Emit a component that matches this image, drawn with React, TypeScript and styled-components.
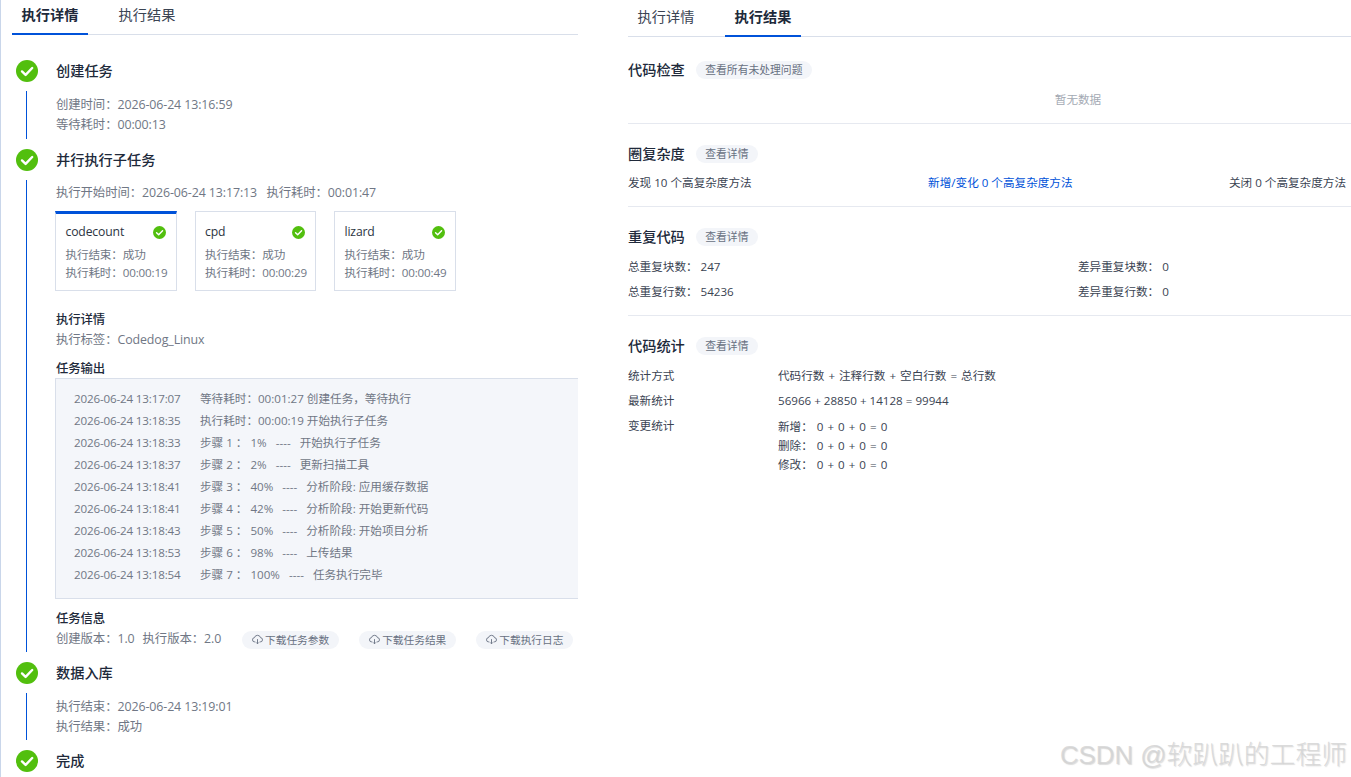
import styled, { createGlobalStyle } from 'styled-components';

const blue = '#0052d9';
const green = '#52bf0e';
const ink = '#20293a';
const gray = '#707785';
const line = '#d9dfea';
const soft = '#f3f5f9';

const GlobalStyle = createGlobalStyle`
  html, body {
    margin: 0;
    background: #fff;
  }
  * {
    box-sizing: border-box;
  }
`;

const Page = styled.div`
  position: relative;
  display: flex;
  width: 1351px;
  height: 777px;
  overflow: hidden;
  background: #fff;
  border-left: 1px solid #c9d6ea;
  font-family: 'Open Sans', 'Noto Sans CJK SC', sans-serif;
  font-size: 12.4px;
  line-height: 20px;
  letter-spacing: -0.1px;
  color: ${gray};
`;

const LeftPane = styled.section`
  width: 566px;
  margin-left: 11px;
  flex-shrink: 0;
`;

const RightPane = styled.section`
  flex: 1;
  margin-left: 50px;
  min-width: 0;
`;

const Tabs = styled.div<{ $tall?: boolean }>`
  display: flex;
  height: ${(p) => (p.$tall ? 37 : 35)}px;
  line-height: ${(p) => (p.$tall ? 33 : 29)}px;
  border-bottom: 1px solid ${line};
`;

const Tab = styled.div<{ $active?: boolean }>`
  width: 76px;
  margin-right: 21px;
  margin-bottom: -1px;
  text-align: center;
  font-size: 14.2px;
  letter-spacing: 0;
  font-weight: ${(p) => (p.$active ? 600 : 400)};
  color: ${(p) => (p.$active ? ink : '#3a4352')};
  border-bottom: 2px solid ${(p) => (p.$active ? blue : 'transparent')};
`;

const Timeline = styled.div`
  padding: 25px 0 0 4px;
`;

const Step = styled.div`
  display: flex;
`;

const Rail = styled.div`
  display: flex;
  flex-direction: column;
  align-items: center;
  width: 22px;
  margin-right: 18px;
  flex-shrink: 0;
`;

const Connector = styled.div`
  flex: 1;
  width: 1px;
  margin: 9px 1px 10px 0;
  background: ${blue};
`;

const StepBody = styled.div<{ $height: number }>`
  flex: 1;
  min-width: 0;
  height: ${(p) => p.$height}px;
`;

const StepTitle = styled.div<{ $gap: number }>`
  font-size: 14.2px;
  line-height: 22px;
  font-weight: 500;
  letter-spacing: 0;
  color: ${ink};
  margin-bottom: ${(p) => p.$gap}px;
`;

const Line = styled.div``;

const CardRow = styled.div`
  display: flex;
  gap: 18px;
  margin: 8px 0 0 -1px;
`;

const Card = styled.div<{ $active?: boolean }>`
  width: 121.5px;
  height: 80px;
  padding: ${(p) => (p.$active ? 8 : 10)}px 10px 0 9.5px;
  border: 1px solid ${line};
  border-top: ${(p) => (p.$active ? `3px solid ${blue}` : `1px solid ${line}`)};
  line-height: 18px;
  font-size: 11.6px;
  letter-spacing: -0.15px;
  white-space: nowrap;
`;

const CardHead = styled.div`
  display: flex;
  align-items: center;
  justify-content: space-between;
  height: 20px;
  margin-bottom: 4px;
  font-size: 12.2px;
  color: #2c3442;
`;

const SubTitle = styled.div<{ $top: number }>`
  margin-top: ${(p) => p.$top}px;
  font-size: 12.4px;
  line-height: 20px;
  font-weight: 500;
  color: ${ink};
`;

const LogBox = styled.div`
  height: 221px;
  margin: -1px 0 0 -1px;
  padding: 9px 18px 0;
  background: #f4f6fa;
  border: 1px solid ${line};
  border-right: 0;
`;

const LogRow = styled.div`
  display: flex;
  height: 22px;
  line-height: 22px;
  font-size: 11.6px;
  letter-spacing: -0.15px;
`;

const LogTime = styled.span`
  width: 126px;
  flex-shrink: 0;
`;

const LogText = styled.span`
  white-space: pre;
  letter-spacing: 0;
`;

const InfoRow = styled.div`
  display: flex;
  align-items: center;
`;

const Versions = styled.div`
  display: flex;
  gap: 8px;
  width: 186px;
`;

const DownloadGroup = styled.div`
  display: flex;
  gap: 20px;
  margin-top: 1px;
`;

const Pill = styled.span`
  display: inline-flex;
  align-items: center;
  height: 18px;
  padding: 0 9.5px;
  border-radius: 9px;
  background: ${soft};
  font-size: 10.8px;
  line-height: 18px;
  letter-spacing: 0;
  color: #687182;
  white-space: nowrap;
`;

const DownloadPill = styled(Pill)`
  gap: 2px;
  padding: 0 10px;
  font-size: 10.7px;
`;

const Sections = styled.div`
  padding-top: 22px;
`;

const Section = styled.div<{ $height: number; $last?: boolean }>`
  height: ${(p) => p.$height}px;
  margin-bottom: 19px;
  border-bottom: ${(p) => (p.$last ? 'none' : '1px solid #e6e9f0')};
  color: #3a4352;
  font-size: 11.6px;
  letter-spacing: 0;
`;

const SectionHead = styled.div`
  display: flex;
  align-items: center;
  gap: 11px;
  height: 22px;
`;

const SectionTitle = styled.div`
  font-size: 14.2px;
  font-weight: 500;
  color: ${ink};
`;

const Empty = styled.div`
  margin-top: 9px;
  padding-left: 177px;
  text-align: center;
  color: #a3a9b3;
`;

const SpreadRow = styled.div`
  display: flex;
  justify-content: space-between;
  margin-top: 8px;
  padding-right: 5px;
`;

const Link = styled.span`
  margin-left: 20px;
  color: ${blue};
`;

const TwoCols = styled.div`
  display: grid;
  grid-template-columns: 450px 1fr;
  row-gap: 5px;
  margin-top: 9px;
`;

const StatRows = styled.div`
  display: grid;
  grid-template-columns: 150px 1fr;
  row-gap: 5px;
  margin-top: 9px;
`;

const Formula = styled.span`
  word-spacing: 1px;
`;

const StatLines = styled.div`
  padding-top: 1px;
  line-height: 19px;
  word-spacing: 1px;
`;

const Watermark = styled.div`
  position: absolute;
  right: 4px;
  bottom: 5px;
  font-family: 'Liberation Sans', 'Noto Sans CJK SC', sans-serif;
  font-size: 25.8px;
  line-height: 34px;
  font-weight: 300;
  letter-spacing: 0;
  white-space: nowrap;
  color: rgba(210, 210, 210, 0.8);
  text-shadow: 1px 1px 1px rgba(120, 120, 120, 0.25);
`;

const CheckSvg = styled.svg`
  flex-shrink: 0;
`;

function CheckIcon({ size }: { size: number }) {
  return (
    <CheckSvg width={size} height={size} viewBox="0 0 22 22">
      <circle cx="11" cy="11" r="11" fill={green} />
      <path d="M6 11.4l3.6 3.5L16.200 8" fill="none" stroke="#fff" strokeWidth="2.4" strokeLinecap="round" strokeLinejoin="round" />
    </CheckSvg>
  );
}

function CloudIcon() {
  return (
    <svg width="11" height="11" viewBox="0 0 12 12" fill="none" stroke="#687182" strokeWidth="1">
      <path d="M3.6 8.6H3a2.3 2.3 0 0 1-.3-4.6 3.4 3.4 0 0 1 6.6 0A2.3 2.3 0 0 1 9 8.6h-.6" />
      <path d="M6 5.6v5M4.500 9.200L6 10.700l1.500-1.500" />
    </svg>
  );
}

const cards = [
  { name: 'codecount', time: '00:00:19', active: true },
  { name: 'cpd', time: '00:00:29' },
  { name: 'lizard', time: '00:00:49' },
];

const logs = [
  ['2026-06-24 13:17:07', '等待耗时：00:01:27 创建任务，等待执行'],
  ['2026-06-24 13:18:35', '执行耗时：00:00:19 开始执行子任务'],
  ['2026-06-24 13:18:33', '步骤 1 ： 1%   ----   开始执行子任务'],
  ['2026-06-24 13:18:37', '步骤 2 ： 2%   ----   更新扫描工具'],
  ['2026-06-24 13:18:41', '步骤 3 ： 40%   ----   分析阶段: 应用缓存数据'],
  ['2026-06-24 13:18:41', '步骤 4 ： 42%   ----   分析阶段: 开始更新代码'],
  ['2026-06-24 13:18:43', '步骤 5 ： 50%   ----   分析阶段: 开始项目分析'],
  ['2026-06-24 13:18:53', '步骤 6 ： 98%   ----   上传结果'],
  ['2026-06-24 13:18:54', '步骤 7 ： 100%   ----   任务执行完毕'],
];

const downloads = ['下载任务参数', '下载任务结果', '下载执行日志'];

export default function App() {
  return (
    <Page>
      <GlobalStyle />
      <LeftPane>
        <Tabs>
          <Tab $active>执行详情</Tab>
          <Tab>执行结果</Tab>
        </Tabs>
        <Timeline>
          <Step>
            <Rail>
              <CheckIcon size={22} />
              <Connector />
            </Rail>
            <StepBody $height={89}>
              <StepTitle $gap={13}>创建任务</StepTitle>
              <Line>创建时间：2026-06-24 13:16:59</Line>
              <Line>等待耗时：00:00:13</Line>
            </StepBody>
          </Step>
          <Step>
            <Rail>
              <CheckIcon size={22} />
              <Connector />
            </Rail>
            <StepBody $height={513}>
              <StepTitle $gap={12}>并行执行子任务</StepTitle>
              <Line>执行开始时间：2026-06-24 13:17:13&nbsp;&nbsp;&nbsp;执行耗时：00:01:47</Line>
              <CardRow>
                {cards.map((card) => (
                  <Card key={card.name} $active={card.active}>
                    <CardHead>
                      {card.name}
                      <CheckIcon size={13} />
                    </CardHead>
                    <Line>执行结束：成功</Line>
                    <Line>执行耗时：{card.time}</Line>
                  </Card>
                ))}
              </CardRow>
              <SubTitle $top={19}>执行详情</SubTitle>
              <Line>执行标签：Codedog_Linux</Line>
              <SubTitle $top={9}>任务输出</SubTitle>
              <LogBox>
                {logs.map((row, i) => (
                  <LogRow key={i}>
                    <LogTime>{row[0]}</LogTime>
                    <LogText>{row[1]}</LogText>
                  </LogRow>
                ))}
              </LogBox>
              <SubTitle $top={10}>任务信息</SubTitle>
              <InfoRow>
                <Versions>
                  <span>创建版本：1.0</span>
                  <span>执行版本：2.0</span>
                </Versions>
                <DownloadGroup>
                  {downloads.map((label) => (
                    <DownloadPill key={label}>
                      <CloudIcon />
                      {label}
                    </DownloadPill>
                  ))}
                </DownloadGroup>
              </InfoRow>
            </StepBody>
          </Step>
          <Step>
            <Rail>
              <CheckIcon size={22} />
              <Connector />
            </Rail>
            <StepBody $height={88}>
              <StepTitle $gap={13}>数据入库</StepTitle>
              <Line>执行结束：2026-06-24 13:19:01</Line>
              <Line>执行结果：成功</Line>
            </StepBody>
          </Step>
          <Step>
            <Rail>
              <CheckIcon size={22} />
            </Rail>
            <StepBody $height={27}>
              <StepTitle $gap={0}>完成</StepTitle>
            </StepBody>
          </Step>
        </Timeline>
      </LeftPane>
      <RightPane>
        <Tabs $tall>
          <Tab>执行详情</Tab>
          <Tab $active>执行结果</Tab>
        </Tabs>
        <Sections>
          <Section $height={65}>
            <SectionHead>
              <SectionTitle>代码检查</SectionTitle>
              <Pill>查看所有未处理问题</Pill>
            </SectionHead>
            <Empty>暂无数据</Empty>
          </Section>
          <Section $height={64}>
            <SectionHead>
              <SectionTitle>圈复杂度</SectionTitle>
              <Pill>查看详情</Pill>
            </SectionHead>
            <SpreadRow>
              <span>发现 10 个高复杂度方法</span>
              <Link>新增/变化 0 个高复杂度方法</Link>
              <span>关闭 0 个高复杂度方法</span>
            </SpreadRow>
          </Section>
          <Section $height={90}>
            <SectionHead>
              <SectionTitle>重复代码</SectionTitle>
              <Pill>查看详情</Pill>
            </SectionHead>
            <TwoCols>
              <span>总重复块数：&nbsp;247</span>
              <span>差异重复块数：&nbsp;0</span>
              <span>总重复行数：&nbsp;54236</span>
              <span>差异重复行数：&nbsp;0</span>
            </TwoCols>
          </Section>
          <Section $height={130} $last>
            <SectionHead>
              <SectionTitle>代码统计</SectionTitle>
              <Pill>查看详情</Pill>
            </SectionHead>
            <StatRows>
              <span>统计方式</span>
              <Formula>代码行数 + 注释行数 + 空白行数 = 总行数</Formula>
              <span>最新统计</span>
              <span>56966 + 28850 + 14128 = 99944</span>
              <span>变更统计</span>
              <StatLines>
                <div>新增：&nbsp;0 + 0 + 0 = 0</div>
                <div>删除：&nbsp;0 + 0 + 0 = 0</div>
                <div>修改：&nbsp;0 + 0 + 0 = 0</div>
              </StatLines>
            </StatRows>
          </Section>
        </Sections>
      </RightPane>
      <Watermark>CSDN @软趴趴的工程师</Watermark>
    </Page>
  );
}
